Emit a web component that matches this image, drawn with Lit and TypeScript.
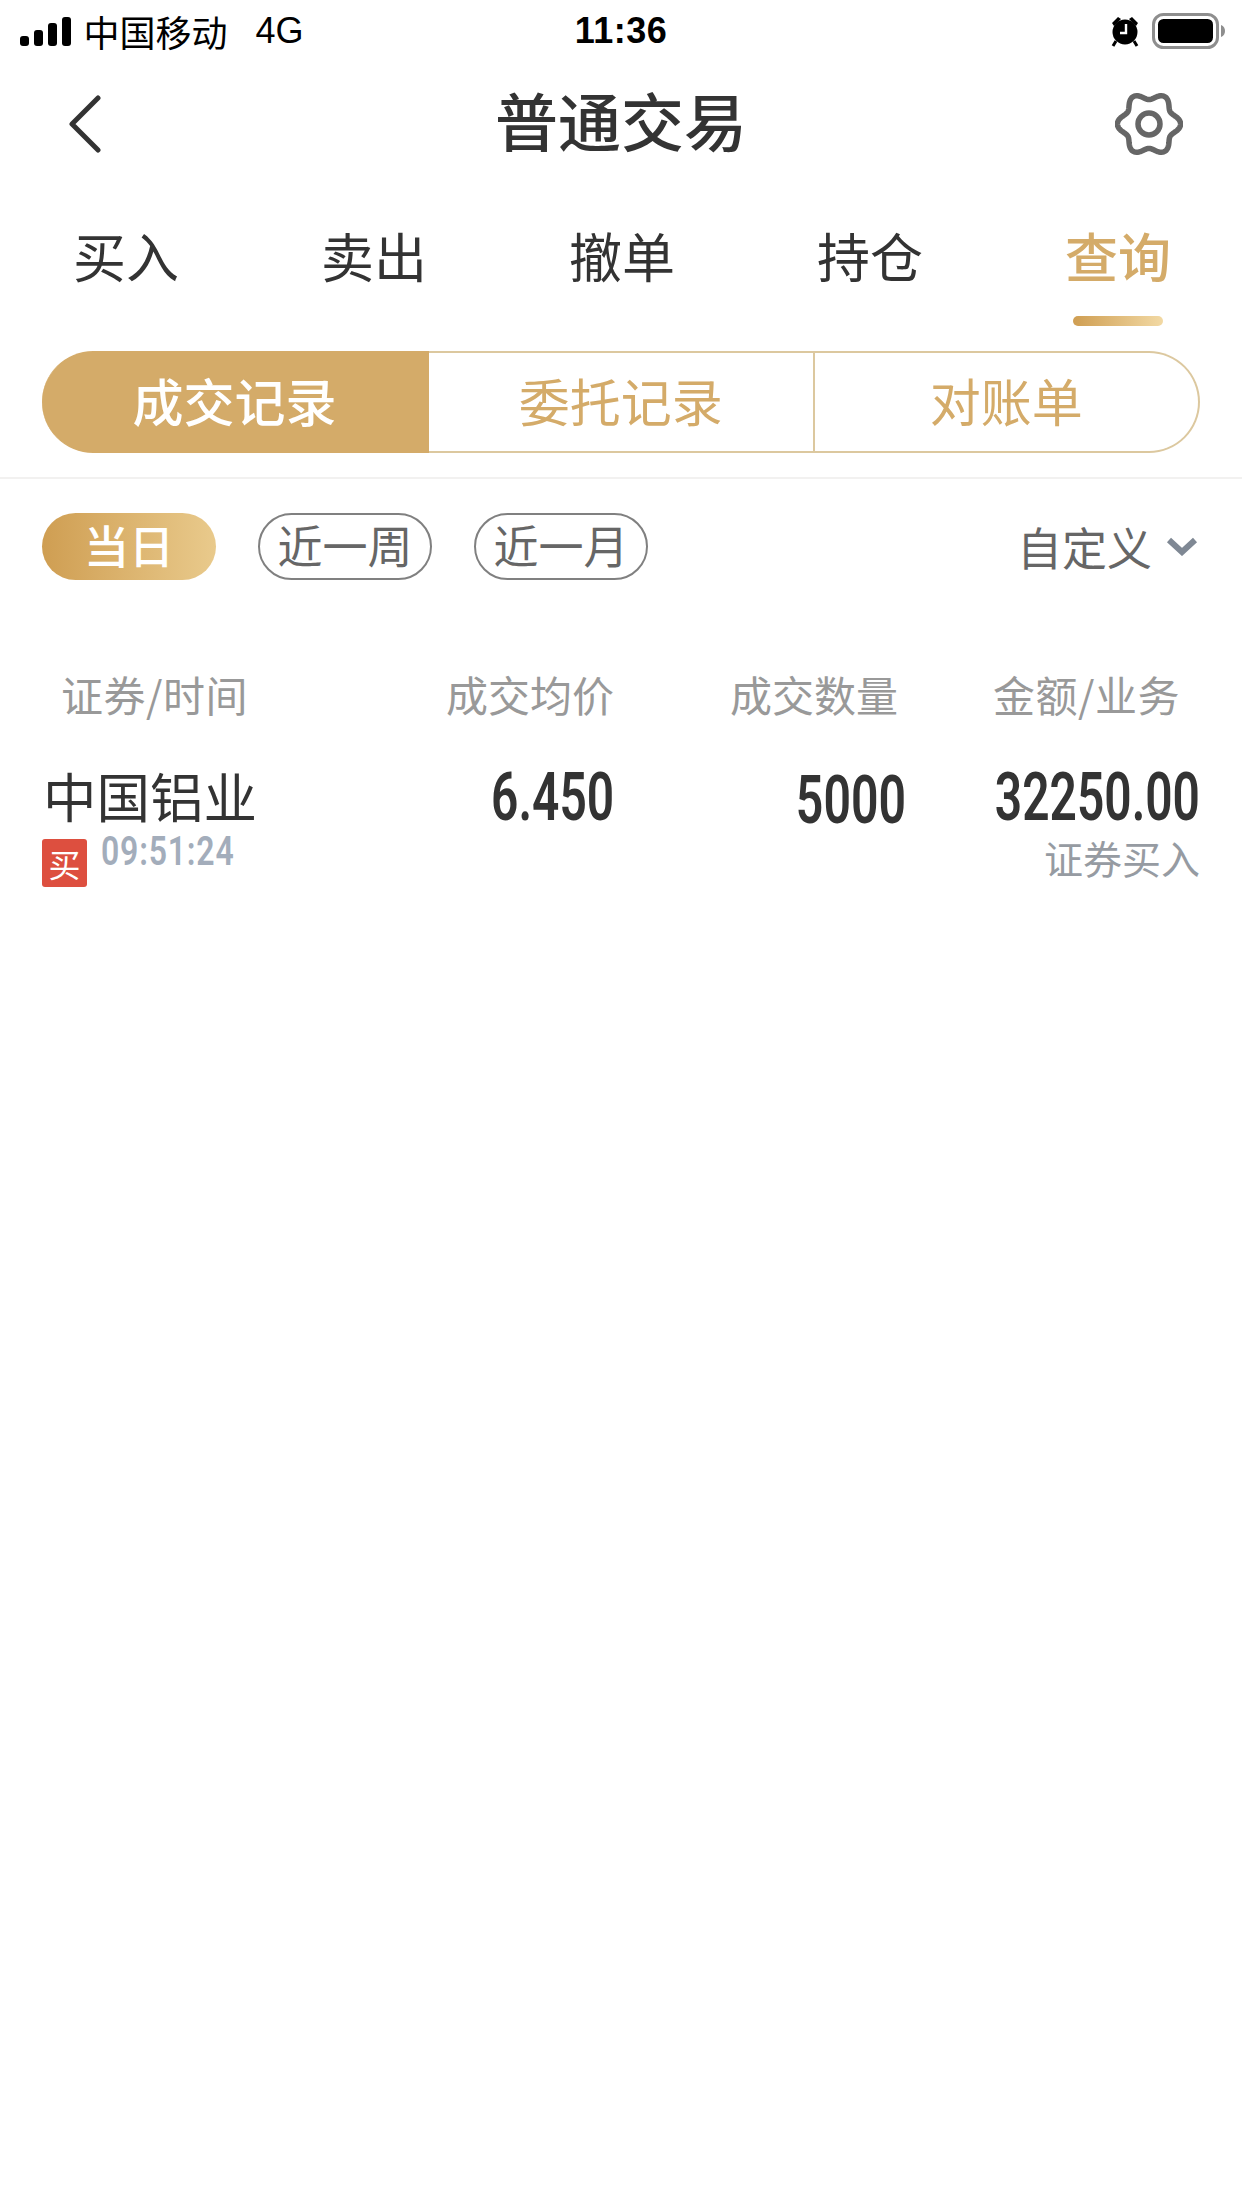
import { LitElement, html, css, svg } from "lit";
import { customElement } from "lit/decorators.js";

function gearPath(cx: number, cy: number, R: number, a: number) {
  const pts: string[] = [];
  for (let i = 0; i < 180; i++) {
    const t = (i / 180) * Math.PI * 2;
    const r = R + a * Math.cos(6 * t);
    pts.push(`${(cx + r * Math.cos(t)).toFixed(2)} ${(cy + r * Math.sin(t)).toFixed(2)}`);
  }
  return "M" + pts.join("L") + "Z";
}

@customElement("app-root")
export class AppRoot extends LitElement {
  static styles = css`
    :host {
      display: block;
      width: 1242px;
      height: 2208px;
      background: #fff;
      color: #333;
      font-family: "Noto Sans CJK SC", "Noto Sans", sans-serif;
      overflow: hidden;
    }
    .status {
      height: 62px;
      display: grid;
      grid-template-columns: 1fr auto 1fr;
      align-items: center;
      padding: 0 16px;
      color: #000;
    }
    .status-left { display: flex; align-items: center; padding-left: 4px; }
    .signal { display: flex; align-items: flex-end; gap: 5.5px; height: 29px; margin-right: 13px; }
    .signal i { display: block; width: 8.5px; background: #000; border-radius: 3px; }
    .carrier { font-size: 36px; line-height: 44px; }
    .net { font-family: "Liberation Sans", sans-serif; font-size: 36px; line-height: 44px; margin-left: 28px; }
    .time { font-family: "Liberation Sans", sans-serif; font-size: 36px; font-weight: 700; line-height: 44px; letter-spacing: 0.5px; }
    .status-right { display: flex; align-items: center; justify-content: flex-end; gap: 12px; }
    .nav {
      height: 126px;
      margin-top: -1px;
      display: grid;
      grid-template-columns: 1fr auto 1fr;
      align-items: center;
      padding: 0 59px;
    }
    .back { margin-left: 9px; display: block; }
    .title { font-size: 63px; font-weight: 500; line-height: 80px; margin-bottom: 10px; }
    .gear { justify-self: end; display: block; }
    .tabs { display: flex; height: 80px; padding-left: 2px; margin-top: 35px; }
    .tab { flex: 0 0 248px; text-align: center; font-size: 53px; line-height: 66px; color: #333; }
    .tab.on { color: #d4ab69; font-weight: 500; }
    .bar-row { height: 49px; display: flex; justify-content: flex-end; padding-right: 79px; padding-top: 14px; box-sizing: border-box; }
    .bar { width: 90px; height: 10px; border-radius: 5px; background: linear-gradient(90deg, #cf9e52, #f2d9a4); }
    .seg {
      margin: 0 42px;
      height: 102px;
      display: flex;
    }
    .seg div {
      flex: 1 1 0;
      box-sizing: border-box;
      text-align: center;
      font-size: 51px;
      line-height: 94px;
      color: #d4ab69;
      border: 2px solid #dcc89f;
      border-left: 0;
    }
    .seg div:last-child { border-radius: 0 51px 51px 0; }
    .seg .on {
      flex: 0 0 387px;
      background: #d4ab69;
      border-color: #d4ab69;
      border-radius: 51px 0 0 51px;
      color: #fff;
      font-weight: 500;
    }
    .rule { height: 2px; background: #f2f1f0; margin-top: 24px; }
    .filters {
      display: flex;
      align-items: center;
      gap: 42px;
      padding: 33px 42px 0;
      height: 68px;
    }
    .pill {
      width: 174px;
      height: 67px;
      box-sizing: border-box;
      border: 2px solid #808080;
      border-radius: 34px;
      text-align: center;
      font-size: 45px;
      line-height: 59px;
      color: #666;
    }
    .pill.on { border: 0; background: linear-gradient(90deg, #cf9e52, #e9ca8c); color: #fff; font-weight: 500; line-height: 64px; }
    .custom { margin-left: auto; display: flex; align-items: center; gap: 14px; font-size: 45px; line-height: 67px; color: #666; padding-right: 2px; }
    .table {
      display: grid;
      grid-template-columns: 350px 222px 293px 293px;
      margin: 0 42px;
    }
    .th { margin-top: 84px; font-size: 42px; line-height: 60px; color: #999; text-align: right; height: 93px; }
    .th.first { text-align: left; padding-left: 19px; letter-spacing: 0.5px; }
    .th.q { padding-right: 9px; }
    .th.a { padding-right: 20px; letter-spacing: 0.5px; }
    .stock { font-size: 53.5px; line-height: 70px; padding-left: 1px; margin-top: 3px; color: #333; }
    .meta { display: flex; gap: 14px; margin-top: 4px; }
    .badge {
      width: 45px;
      height: 48px;
      background: #dd4f3f;
      border-radius: 3px;
      color: #fff;
      font-size: 32px;
      line-height: 48px;
      text-align: center;
      flex: none;
      margin-top: 5px;
    }
    .clock { display: inline-block; font-family: Roboto, sans-serif; font-weight: 600; font-size: 40px; line-height: 40px; letter-spacing: 1px; color: #a3adbb; transform: scaleX(0.8); transform-origin: left center; white-space: nowrap; margin-top: -2px; height: 40px; }
    .numcell { margin-top: 5px; }
    .num {
      font-family: Roboto, sans-serif;
      font-weight: 600;
      font-size: 67px;
      line-height: 70px;
      color: #333;
      text-align: right;
      white-space: nowrap;
    }
    .num span { display: inline-block; transform: scaleX(0.715); transform-origin: right center; }
    .num.low { margin-top: 3px; }
    .num.low span { margin-right: 1px; transform: scaleX(0.72); }
    .sub { font-size: 39px; line-height: 46px; color: #969ba2; text-align: right; margin-top: 2px; }
  `;

  render() {
    const tabs = ["买入", "卖出", "撤单", "持仓", "查询"];
    return html`
      <div class="status">
        <div class="status-left">
          <div class="signal">
            ${[10, 16, 23, 29].map((h) => html`<i style="height:${h}px"></i>`)}
          </div>
          <span class="carrier">中国移动</span>
          <span class="net">4G</span>
        </div>
        <div class="time">11:36</div>
        <div class="status-right">
          <svg width="30" height="34" viewBox="0 0 30 34">
            <circle cx="15" cy="18" r="12.5" fill="#000"/>
            <path d="M2 9 L8 3 L11 5 L4 12Z M28 9 L22 3 L19 5 L26 12Z" fill="#000"/>
            <path d="M6 27 L3 32 M24 27 L27 32" stroke="#000" stroke-width="3"/>
            <path d="M16 10 V19 H10" fill="none" stroke="#fff" stroke-width="2.4"/>
          </svg>
          <svg width="74" height="36" viewBox="0 0 74 36">
            <rect x="1.5" y="1.5" width="64" height="33" rx="10" fill="none" stroke="#8e8e8e" stroke-width="3"/>
            <rect x="6" y="6" width="55" height="24" rx="5.5" fill="#000"/>
            <path d="M69 12 C72 13 73 15.5 73 18 C73 20.5 72 23 69 24Z" fill="#8e8e8e"/>
          </svg>
        </div>
      </div>
      <div class="nav">
        <svg class="back" width="34" height="58" viewBox="0 0 34 58">
          <path d="M30 3 L4 29 L30 55" fill="none" stroke="#333" stroke-width="5" stroke-linecap="round" stroke-linejoin="round"/>
        </svg>
        <div class="title">普通交易</div>
        <svg class="gear" width="68" height="68" viewBox="0 0 68 68">
          ${svg`<path d=${gearPath(34, 34, 28, 3.6)} fill="none" stroke="#666" stroke-width="5.5" stroke-linejoin="round"/>`}
          <circle cx="34" cy="34" r="11" fill="none" stroke="#666" stroke-width="5.5"/>
        </svg>
      </div>
      <div class="tabs">
        ${tabs.map((t, i) => html`<div class="tab ${i === 4 ? "on" : ""}">${t}</div>`)}
      </div>
      <div class="bar-row"><div class="bar"></div></div>
      <div class="seg">
        <div class="on">成交记录</div>
        <div>委托记录</div>
        <div>对账单</div>
      </div>
      <div class="rule"></div>
      <div class="filters">
        <div class="pill on">当日</div>
        <div class="pill">近一周</div>
        <div class="pill">近一月</div>
        <div class="custom">
          自定义
          <svg width="32" height="20" viewBox="0 0 32 20">
            <path d="M3 4 L16 16 L29 4" fill="none" stroke="#7f8894" stroke-width="6"/>
          </svg>
        </div>
      </div>
      <div class="table">
        <div class="th first">证券/时间</div>
        <div class="th">成交均价</div>
        <div class="th q">成交数量</div>
        <div class="th a">金额/业务</div>
        <div>
          <div class="stock">中国铝业</div>
          <div class="meta">
            <div class="badge">买</div>
            <span class="clock">09:51:24</span>
          </div>
        </div>
        <div class="numcell"><div class="num"><span>6.450</span></div></div>
        <div class="numcell"><div class="num low"><span>5000</span></div></div>
        <div class="numcell">
          <div class="num"><span>32250.00</span></div>
          <div class="sub">证券买入</div>
        </div>
      </div>
    `;
  }
}
